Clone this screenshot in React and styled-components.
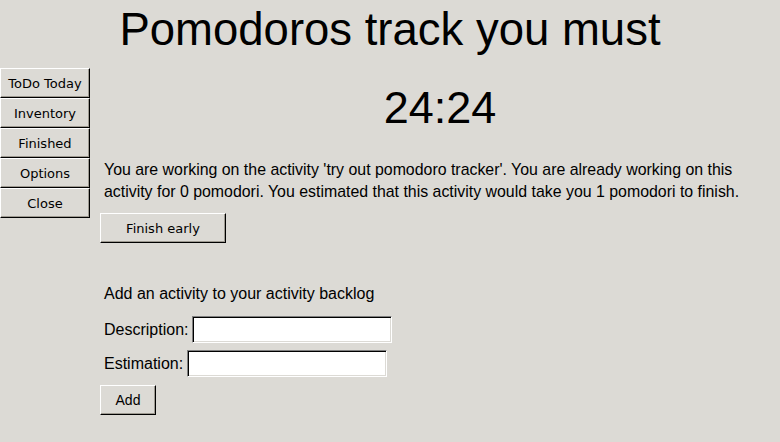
import React, { useState } from 'react';
import styled, { createGlobalStyle } from 'styled-components';

const GlobalStyle = createGlobalStyle`
  html, body {
    margin: 0;
    padding: 0;
    background: #dcdad5;
  }
  body {
    width: 780px;
    height: 442px;
    overflow: hidden;
    font-family: "Liberation Sans", Arial, sans-serif;
    color: #000;
  }
`;

const Window = styled.div`
  width: 780px;
  height: 442px;
  background: #dcdad5;
  display: flex;
  flex-direction: column;
`;

const Title = styled.h1`
  margin: 0 0 12px 0;
  padding-top: 4px;
  font-family: "Liberation Sans", Arial, sans-serif;
  font-weight: normal;
  font-size: 45.5px;
  line-height: 52px;
  text-align: center;
`;

const Body = styled.div`
  display: flex;
  align-items: flex-start;
`;

const Nav = styled.nav`
  width: 90px;
  display: flex;
  flex-direction: column;
  margin-right: 10px;
`;

const RaisedButton = styled.button`
  box-sizing: border-box;
  background: #dcdad5;
  border: 1px solid;
  border-color: #fff #000 #000 #fff;
  box-shadow: inset -1px -1px 0 #9e9a91;
  border-radius: 0;
  padding: 0;
  margin: 0;
  color: #000;
  font-family: ${(p) => (p.$arial ? '"Liberation Sans", Arial, sans-serif' : '"DejaVu Sans", sans-serif')};
  font-size: ${(p) => p.$size || 13}px;
  width: ${(p) => p.$width}px;
  height: 30px;
  cursor: pointer;
`;

const Content = styled.main`
  flex: 1;
  display: flex;
  flex-direction: column;
  align-items: flex-start;
`;

const Timer = styled.div`
  align-self: stretch;
  margin-top: 14px;
  font-size: 45px;
  line-height: 52px;
  text-align: center;
`;

const Text = styled.p`
  margin: ${(p) => p.$mt || 0}px 0 0 0;
  padding-left: 4px;
  max-width: 660px;
  font-size: ${(p) => p.$size || 16}px;
  line-height: 22px;
`;

const Spaced = styled.div`
  margin-top: ${(p) => p.$mt}px;
`;

const Field = styled.label`
  display: flex;
  align-items: center;
  gap: 4px;
  margin-top: ${(p) => p.$mt}px;
  padding-left: 4px;
  font-size: 16px;
  line-height: 21px;
`;

const Entry = styled.input`
  box-sizing: border-box;
  width: 200px;
  height: 27px;
  margin: 0;
  padding: 2px 4px;
  background: #fff;
  border: 1px solid;
  border-color: #7f7f7f #fff #fff #7f7f7f;
  box-shadow: inset 1px 1px 0 #000, inset -1px -1px 0 #dcdad5;
  font-family: "Liberation Sans", Arial, sans-serif;
  font-size: 16px;
  outline: none;
`;

const menu = ['ToDo Today', 'Inventory', 'Finished', 'Options', 'Close'];

export default function App() {
  const [description, setDescription] = useState('');
  const [estimation, setEstimation] = useState('');

  return (
    <>
      <GlobalStyle />
      <Window>
        <Title>Pomodoros track you must</Title>
        <Body>
          <Nav>
            {menu.map((item) => (
              <RaisedButton key={item} $width={90} $size={13}>
                {item}
              </RaisedButton>
            ))}
          </Nav>
          <Content>
            <Timer>24:24</Timer>
            <Text $mt={25} $size={15.9}>
              You are working on the activity 'try out pomodoro tracker'. You are already working on this
              activity for 0 pomodori. You estimated that this activity would take you 1 pomodori to finish.
            </Text>
            <Spaced $mt={10}>
              <RaisedButton $width={126}>Finish early</RaisedButton>
            </Spaced>
            <Text $mt={40}>Add an activity to your activity backlog</Text>
            <Field $mt={11}>
              Description:
              <Entry value={description} onChange={(e) => setDescription(e.target.value)} />
            </Field>
            <Field $mt={7}>
              Estimation:
              <Entry value={estimation} onChange={(e) => setEstimation(e.target.value)} />
            </Field>
            <Spaced $mt={8}>
              <RaisedButton $width={56} $size={14} $arial>
                Add
              </RaisedButton>
            </Spaced>
          </Content>
        </Body>
      </Window>
    </>
  );
}
